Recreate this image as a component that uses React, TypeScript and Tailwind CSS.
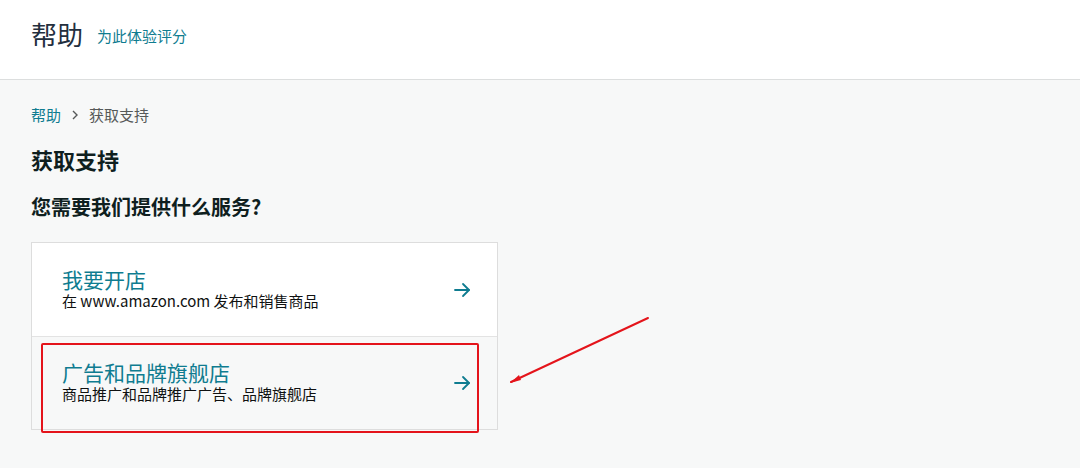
import React from 'react';

const font = { fontFamily: '"Noto Sans CJK SC", "Noto Sans", sans-serif' };

const ArrowRight = () => (
  <svg width="18" height="18" viewBox="0 0 18 18" fill="none" stroke="#0f7c90" strokeWidth="1.8" strokeLinecap="round" strokeLinejoin="round">
    <path d="M2 9h14" />
    <path d="M10 3l6 6-6 6" />
  </svg>
);

const options = [
  { title: '我要开店', desc: '在 www.amazon.com 发布和销售商品', bg: 'bg-white' },
  { title: '广告和品牌旗舰店', desc: '商品推广和品牌推广广告、品牌旗舰店', bg: 'bg-[#f7f8f8]' },
];

export default function App() {
  return (
    <div className="relative w-[1080px] h-[468px] overflow-hidden bg-[#f7f8f8] text-[#0f1111]" style={font}>
      <header className="h-[80px] bg-white border-b border-[#dcdede] flex items-center pl-[31px] pb-[12px]">
        <h1 className="text-[26px] leading-none text-[#232f3e]">帮助</h1>
        <a className="ml-[14px] mt-[5px] text-[15px] text-[#0f7c90]">为此体验评分</a>
      </header>

      <main className="pl-[31px] pt-[25px]">
        <nav className="flex items-center text-[15px] leading-[20px]">
          <span className="text-[#0f7c90]">帮助</span>
          <svg className="mx-[10px]" width="8" height="12" viewBox="0 0 8 12" fill="none" stroke="#565959" strokeWidth="1.4">
            <path d="M2 2l4 4-4 4" />
          </svg>
          <span className="text-[#565959]">获取支持</span>
        </nav>

        <h2 className="mt-[19px] text-[22px] font-bold leading-[30px] text-[#0f1f1f]">获取支持</h2>
        <h3 className="mt-[19px] text-[20px] font-bold leading-[28px] text-[#0f1f1f]">您需要我们提供什么服务?</h3>

        <div className="mt-[21px] w-[467px] border border-[#dddddd]">
          {options.map((o, i) => (
            <div
              key={o.title}
              className={`${o.bg} h-[93px] flex items-center justify-between pl-[30px] pr-[26px] ${i > 0 ? 'border-t border-[#e3e3e3]' : ''}`}
            >
              <div className="pb-[4px]">
                <div className="text-[21px] leading-[26px] text-[#0f7c90]">{o.title}</div>
                <div className="text-[15px] leading-[18px] text-[#0f1111]">{o.desc}</div>
              </div>
              <ArrowRight />
            </div>
          ))}
        </div>
      </main>

      <div className="absolute left-[41px] top-[343px] w-[438px] h-[90px] border-2 border-[#e4141b] rounded-[2px]" />

      <svg className="absolute left-0 top-0" width="1080" height="468" viewBox="0 0 1080 468" fill="none">
        <path d="M648 318 L511 382" stroke="#e4141b" strokeWidth="2" strokeLinecap="round" />
        <path d="M510 383 L519 375 L521 380 Z" fill="#e4141b" />
      </svg>
    </div>
  );
}
